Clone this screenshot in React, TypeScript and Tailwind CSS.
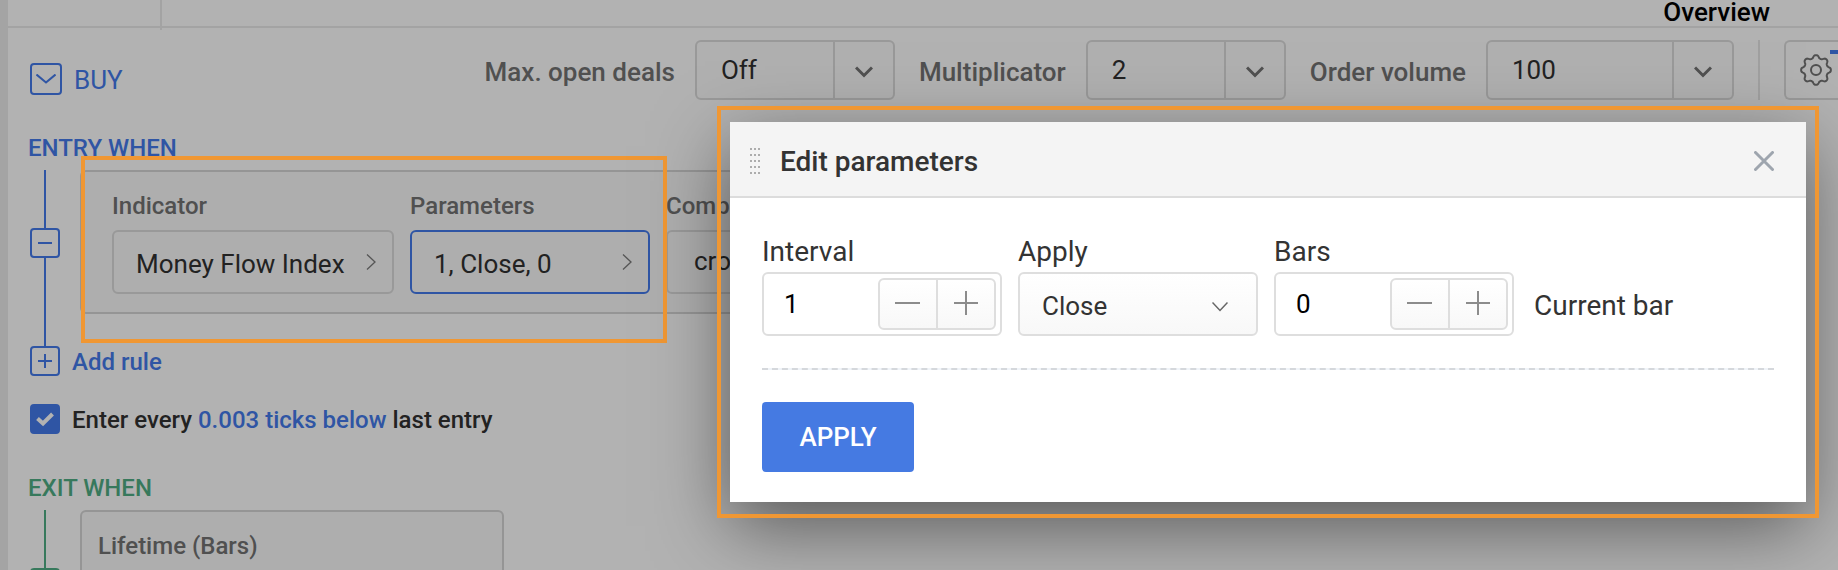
import React, { useState } from 'react';

const ORANGE_FRAME = 'pointer-events-none absolute border-4 border-[#f09733]';
const RULE_LABEL = 'text-2xl leading-7 font-medium text-[#505050]';
const RULE_BOX = 'flex h-16 items-center justify-between rounded-md border-2 pl-5.5 pr-4 text-[26px] text-[#222]';

// Outline with eight rounded teeth around the center of a 32px box
const gearPath = () => {
  const points: string[] = [];
  for (let i = 0; i < 160; i++) {
    const a = (i / 160) * Math.PI * 2;
    const r = 13.4 + 1.7 * Math.tanh(1.3 * Math.cos(8 * a));
    points.push(`${(16 + r * Math.cos(a)).toFixed(2)} ${(16 + r * Math.sin(a)).toFixed(2)}`);
  }
  return `M${points.join('L')}Z`;
};

const Gear = () => (
  <svg width="32" height="32" viewBox="0 0 32 32" fill="none" stroke="#505050" strokeWidth="2" strokeLinejoin="round">
    <path d={gearPath()} />
    <circle cx="16" cy="16" r="5" />
  </svg>
);

const ChevronRight = () => (
  <svg width="10" height="16" viewBox="0 0 10 16" fill="none" stroke="#555" strokeWidth="1.3">
    <path d="M1 0.5L9 8L1 15.5" />
  </svg>
);

const PlusMinus = ({ plus }: { plus?: boolean }) => (
  <svg width="14" height="14" viewBox="0 0 14 14" fill="none" stroke="currentColor" strokeWidth="2">
    <path d={plus ? 'M0 7H14M7 0V14' : 'M0 7H14'} />
  </svg>
);

interface ComboProps {
  id: string;
  label: string;
  initial: string;
  wide?: boolean;
}

const Combo: React.FC<ComboProps> = ({ id, label, initial, wide }) => {
  const [value, setValue] = useState(initial);
  return (
    <div className="flex items-center gap-5">
      <label htmlFor={id} className="pt-1 text-[26px] font-medium whitespace-nowrap text-[#505050]">{label}</label>
      <div className={`flex h-15 rounded-md border-2 border-[#999] bg-[#afafaf]/60 ${wide ? 'w-62' : 'w-50'}`}>
        <input
          id={id}
          value={value}
          onChange={e => setValue(e.target.value)}
          className="min-w-0 flex-1 bg-transparent pl-6 text-[26px] text-[#222] outline-none"
        />
        <button aria-label={`${label} options`} className="flex w-15 items-center justify-center border-l-2 border-[#999] pt-1">
          <svg width="18" height="12" viewBox="0 0 18 12" fill="none" stroke="#505050" strokeWidth="3">
            <path d="M1 1.5L9 9.5L17 1.5" />
          </svg>
        </button>
      </div>
    </div>
  );
};

const Stepper = ({ id, label, initial }: { id: string; label: string; initial: number }) => {
  const [value, setValue] = useState(initial);
  return (
    <div className="flex w-60 flex-col gap-0.5">
      <label htmlFor={id} className="text-[28px] leading-9 text-[#333]">{label}</label>
      <div className="flex h-16 rounded-md border-2 border-[#dedede] bg-white p-1">
        <input
          id={id}
          value={value}
          onChange={e => setValue(Number(e.target.value) || 0)}
          className="min-w-0 flex-1 bg-transparent pl-4 text-[26px] text-black outline-none"
        />
        <div className="flex w-[118px] rounded-md border-2 border-[#dedede] bg-gradient-to-b from-white to-[#f8f8f8]">
          <button
            aria-label={`Decrease ${label}`}
            onClick={() => setValue(value - 1)}
            className="flex flex-1 items-center justify-center border-r-2 border-[#dedede]"
          >
            <svg width="26" height="26" viewBox="0 0 26 26" stroke="#8c8c8c" strokeWidth="2"><path d="M0 12H25" /></svg>
          </button>
          <button
            aria-label={`Increase ${label}`}
            onClick={() => setValue(value + 1)}
            className="flex w-14 items-center justify-center"
          >
            <svg width="26" height="26" viewBox="0 0 26 26" stroke="#8c8c8c" strokeWidth="2"><path d="M1 12H25M13 0V24" /></svg>
          </button>
        </div>
      </div>
    </div>
  );
};

const EditParameters = () => (
  <div
    role="dialog"
    aria-label="Edit parameters"
    className="absolute top-[122px] right-8 w-[1076px] max-w-[calc(100%-64px)] bg-white shadow-[0_24px_70px_rgba(0,0,0,0.5)]"
  >
    <div className="flex h-19 items-center border-b-2 border-[#dcdcdc] bg-[#f4f4f4] pt-1 pr-8 pl-5">
      <svg width="10" height="26" viewBox="0 0 10 26" fill="#adadad">
        {[0, 6, 12, 18, 24].map(y => [0, 4, 8].map(x => <rect key={`${x}-${y}`} x={x} y={y} width="2" height="2" />))}
      </svg>
      <h2 className="ml-5 flex-1 pt-0.5 text-[28px] font-medium text-[#333]">Edit parameters</h2>
      <button aria-label="Close">
        <svg width="20" height="20" viewBox="0 0 20 20" stroke="#9ea5ae" strokeWidth="3" strokeLinecap="round">
          <path d="M1.5 1.5L18.5 18.5M18.5 1.5L1.5 18.5" />
        </svg>
      </button>
    </div>

    <div className="px-8 pt-9 pb-[30px]">
      <div className="flex gap-4">
        <Stepper id="interval" label="Interval" initial={1} />
        <div className="flex w-60 flex-col gap-0.5">
          <label htmlFor="apply" className="text-[28px] leading-9 text-[#333]">Apply</label>
          <div className="relative">
            <select
              id="apply"
              className="h-16 w-full appearance-none rounded-md border-2 border-[#dedede] bg-gradient-to-b from-white to-[#f8f8f8] pt-1 pl-5.5 text-[26px] text-[#333] outline-none"
            >
              <option>Close</option>
            </select>
            <svg className="pointer-events-none absolute top-7.5 right-7.5" width="16" height="10" viewBox="0 0 16 10" fill="none" stroke="#666" strokeWidth="1.5">
              <path d="M0.5 0.5L8 8.5L15.5 0.5" />
            </svg>
          </div>
        </div>
        <Stepper id="bars" label="Bars" initial={0} />
        <span className="flex h-16 items-center self-end pt-1 pl-1 text-[28px] text-[#333]">Current bar</span>
      </div>

      <hr className="my-8 border-t-2 border-dashed border-[#d5d8dc] bg-[#f0f4f9]" />

      <button className="h-[70px] w-38 rounded bg-[#457ae2] text-[26px] font-medium text-white">APPLY</button>
    </div>
    <div className={`${ORANGE_FRAME} -inset-x-[13px] -inset-y-4`} />
  </div>
);

export default function App() {
  const [repeat, setRepeat] = useState(true);

  return (
    <div className="relative flex h-screen overflow-hidden bg-[#b2b2b2] font-[Roboto,sans-serif]">
      <div className="w-2 shrink-0 bg-[#a4a4a4]" />

      <main className="min-w-0 flex-1">
        {/* Tabs */}
        <div className="flex h-7 justify-between border-b-2 border-[#a3a3a3] pr-17">
          <div className="h-7.5 w-[154px] border-r-2 border-[#a3a3a3]" />
          <a href="#overview" className="text-[26px] leading-6 font-medium text-black">Overview</a>
        </div>

        {/* Toolbar */}
        <div className="flex justify-between pt-3">
          <div className="flex items-center gap-3 self-start pt-5.5 pl-5.5 text-[26px] leading-8 text-[#2f55a4]">
            <button aria-label="Collapse buy rules" className="flex size-8 items-center justify-center rounded border-2 border-current">
              <svg width="20" height="10" viewBox="0 0 20 10" fill="none" stroke="currentColor" strokeWidth="2">
                <path d="M0.5 0.5L10 8.5L19.5 0.5" />
              </svg>
            </button>
            <span className="pt-0.5">BUY</span>
          </div>
          <div className="flex gap-6">
            <Combo id="deals" label="Max. open deals" initial="Off" />
            <Combo id="multiplicator" label="Multiplicator" initial="2" />
            <Combo id="volume" label="Order volume" initial="100" wide />
            <div className="w-0.5 bg-[#a0a0a0]" />
            <button aria-label="Settings" className="relative flex w-[54px] items-center rounded-l-md border-2 border-r-0 border-[#999] pl-3.5">
              <Gear />
              <span className="absolute top-2 right-0 h-1 w-2 bg-[#2f55a4]" />
            </button>
          </div>
        </div>

        {/* Entry rules */}
        <section className="pt-[34px] pl-5 text-[#2f55a4]">
          <h3 className="text-2xl leading-7 font-medium">ENTRY WHEN</h3>
          <div className="mt-2 ml-0.5 flex gap-5">
            <div className="flex w-[30px] shrink-0 flex-col items-center">
              <div className="h-[58px] w-0.5 bg-current" />
              <button aria-label="Remove rule" className="flex size-[30px] items-center justify-center rounded border-2 border-current">
                <PlusMinus />
              </button>
              <div className="w-0.5 flex-1 bg-current" />
            </div>
            <div className="relative mb-8 flex gap-4 rounded-md border-2 border-[#959595] bg-[#aeaeae] px-[30px] pt-5 pb-[18px]">
              <div className="flex w-[282px] flex-col gap-2.5">
                <span className={RULE_LABEL}>Indicator</span>
                <button className={`${RULE_BOX} border-[#999]`}>
                  <span className="pt-1">Money Flow Index</span>
                  <ChevronRight />
                </button>
              </div>
              <div className="flex w-60 flex-col gap-2.5">
                <span className={RULE_LABEL}>Parameters</span>
                <button className={`${RULE_BOX} border-[#2f55a4]`}>
                  <span className="pt-1">1, Close, 0</span>
                  <ChevronRight />
                </button>
              </div>
              <div className="flex w-60 flex-col gap-2.5">
                <label htmlFor="comparison" className={RULE_LABEL}>Comparison</label>
                <select id="comparison" className="h-16 appearance-none rounded-md border-2 border-[#999] pb-0.5 pl-6.5 text-[26px] text-[#222]">
                  <option>crosses</option>
                </select>
              </div>
              <div className={`${ORANGE_FRAME} -top-4 -left-px h-[187px] w-[586px]`} />
            </div>
          </div>

          <button className="ml-0.5 flex h-[30px] items-center gap-3 text-2xl font-medium">
            <span className="flex size-[30px] items-center justify-center rounded border-2 border-current">
              <PlusMinus plus />
            </span>
            <span className="pt-0.5">Add rule</span>
          </button>

          <div className="mt-7 ml-0.5 flex h-[30px] items-center gap-3 text-2xl font-medium">
            <span className="relative flex size-[30px]">
              <input
                id="repeat"
                type="checkbox"
                checked={repeat}
                onChange={e => setRepeat(e.target.checked)}
                className="size-[30px] appearance-none rounded border-2 border-[#2f55a4] checked:bg-[#2f55a4]"
              />
              {repeat && (
                <svg className="pointer-events-none absolute inset-0" width="30" height="30" viewBox="0 0 30 30" fill="none" stroke="#b2b2b2" strokeWidth="4">
                  <path d="M7.5 14.5L13 19.5L22.5 10" />
                </svg>
              )}
            </span>
            <label htmlFor="repeat" className="pt-0.5 text-[#222]">
              Enter every <a href="#ticks" className="text-[#2f55a4]">0.003 ticks below</a> last entry
            </label>
          </div>
        </section>

        {/* Exit rules */}
        <section className="pt-10 pl-5 text-[#37795c]">
          <h3 className="text-2xl leading-7 font-medium">EXIT WHEN</h3>
          <div className="mt-2 ml-0.5 flex gap-5">
            <div className="flex w-[30px] shrink-0 flex-col items-center">
              <div className="h-[58px] w-0.5 bg-current" />
              <button aria-label="Remove exit rule" className="flex size-[30px] items-center justify-center rounded border-2 border-current">
                <PlusMinus />
              </button>
            </div>
            <div className="h-36 w-106 rounded-md border-2 border-[#959595] bg-[#aeaeae] px-4 pt-5">
              <span className={RULE_LABEL}>Lifetime (Bars)</span>
            </div>
          </div>
        </section>
      </main>

      <EditParameters />
    </div>
  );
}
